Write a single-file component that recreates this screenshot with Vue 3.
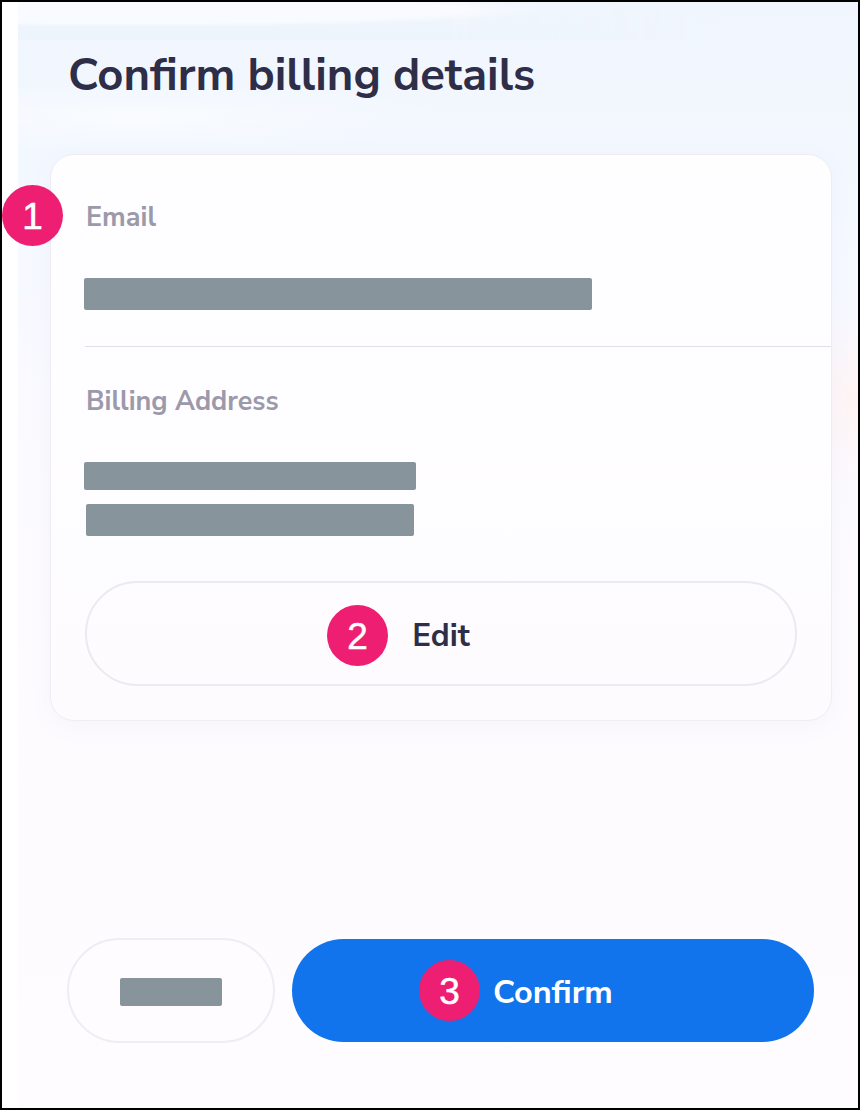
<template>
  <div class="page">
    <div class="screen">
      <div class="swoosh"></div>
      <h1 class="title">Confirm billing details</h1>

      <section class="card">
        <span class="badge badge-one">1</span>
        <div class="label first">Email</div>
        <div class="redact email"></div>
        <div class="divider"></div>
        <div class="label second">Billing Address</div>
        <div class="redact addr-a"></div>
        <div class="redact addr-b"></div>
        <button class="edit-btn">
          <span class="badge badge-two">2</span>
          Edit
        </button>
      </section>

      <footer class="actions">
        <button class="back-btn"><span class="redact back"></span></button>
        <button class="confirm-btn">
          <span class="badge badge-three">3</span>
          Confirm
        </button>
      </footer>
    </div>
  </div>
</template>

<script setup>
</script>

<style>
html, body {
  margin: 0;
  background: #fff;
}
</style>

<style scoped>
.page {
  width: 860px;
  height: 1110px;
  box-sizing: border-box;
  border: 2px solid #000;
  padding-left: 16px;
  background: #fff;
  font-family: "Nunito Sans", Lato, "Noto Sans", sans-serif;
}

.screen {
  position: relative;
  height: 100%;
  display: flex;
  flex-direction: column;
  background:
    radial-gradient(70px 90px at 100% 36%, #fff4f4 0%, rgba(255, 244, 244, 0) 100%),
    radial-gradient(320px 34px at 120px 116px, rgba(250, 252, 255, 0.8) 0%, rgba(250, 252, 255, 0) 100%),
    linear-gradient(180deg, #f1f6fe 0%, #f3f8ff 14%, #f6f9ff 24%, #fbfaff 38%, #fdfbfe 60%, #fefcff 100%);
}

.swoosh {
  position: absolute;
  top: 0;
  left: 0;
  right: 0;
  height: 38px;
  background:
    radial-gradient(420px 17px at 110px 8px, #f8fbff 0%, #f8fbff 78%, rgba(248, 251, 255, 0) 100%),
    linear-gradient(180deg, #f1f6fd 0%, #edf4fc 100%);
  -webkit-mask-image: linear-gradient(90deg, #000 0%, #000 50%, transparent 85%);
  mask-image: linear-gradient(90deg, #000 0%, #000 50%, transparent 85%);
}

.title {
  position: relative;
  margin: 44px 0 0 50px;
  font-size: 45.4px;
  line-height: 58px;
  font-weight: 700;
  color: #2f2e48;
}

.card {
  position: relative;
  box-sizing: border-box;
  width: 782px;
  height: 567px;
  margin: 50px 0 0 32px;
  padding: 0 34px 0 33px;
  display: flex;
  flex-direction: column;
  align-items: flex-start;
  background: linear-gradient(180deg, #fffeff 0%, #fefdff 50%, #fdfbfe 100%);
  border: 1px solid #efecf3;
  border-radius: 24px;
  box-shadow: 0 6px 24px rgba(120, 110, 170, 0.05);
}

.label {
  font-size: 27px;
  line-height: 32px;
  font-weight: 700;
  color: #9c99ab;
  margin-left: 2px;
}

.label.first {
  margin-top: 47px;
}

.label.second {
  margin-top: 39px;
}

.redact {
  display: block;
  background: #88949c;
  border-radius: 2px;
}

.email {
  width: 508px;
  height: 32px;
  margin-top: 44px;
}

.divider {
  height: 1px;
  align-self: stretch;
  margin: 36px -34px 0 1px;
  background: #e0dee6;
}

.addr-a {
  width: 332px;
  height: 28px;
  margin-top: 44px;
}

.addr-b {
  width: 328px;
  height: 32px;
  margin: 14px 0 0 2px;
}

.edit-btn {
  position: relative;
  box-sizing: border-box;
  width: 712px;
  height: 105px;
  margin: 45px 0 0 1px;
  padding: 3px 0 0;
  background: transparent;
  border: 2px solid #ece9ef;
  border-radius: 53px;
  font: 700 31.5px "Nunito Sans", Lato, "Noto Sans", sans-serif;
  color: #2f2e48;
}

.actions {
  display: flex;
  align-items: center;
  gap: 17px;
  margin: 217px 0 0 49px;
}

.back-btn {
  box-sizing: border-box;
  width: 208px;
  height: 105px;
  padding: 2px 0 0;
  display: flex;
  align-items: center;
  justify-content: center;
  background: #fefcff;
  border: 2px solid #efecf2;
  border-radius: 53px;
}

.back {
  width: 102px;
  height: 28px;
}

.confirm-btn {
  position: relative;
  width: 522px;
  height: 103px;
  padding: 2px 0 0;
  background: #1174ec;
  border: none;
  border-radius: 52px;
  font: 700 32.5px "Nunito Sans", Lato, "Noto Sans", sans-serif;
  color: #fff;
}

/* annotation markers sit over the screenshot */
.badge {
  position: absolute;
  box-sizing: border-box;
  width: 61px;
  height: 61px;
  padding-top: 3px;
  border-radius: 50%;
  display: flex;
  align-items: center;
  justify-content: center;
  background: #ee1f72;
  color: #fff;
  font: 400 37px "Liberation Sans", Arial, sans-serif;
  -webkit-text-stroke: 0.5px #fff;
}

.badge-one {
  left: -49px;
  top: 30px;
}

.badge-two {
  left: 240px;
  top: 22px;
}

.badge-three {
  left: 127px;
  top: 21px;
}
</style>
